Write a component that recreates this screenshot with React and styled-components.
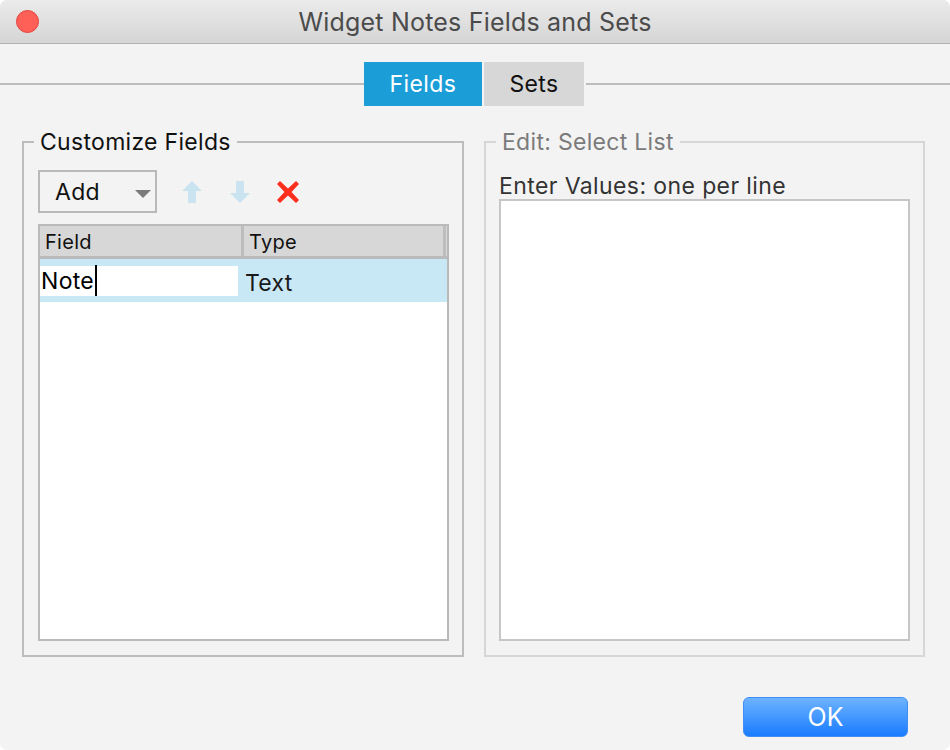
import React from "react";
import styled, { createGlobalStyle } from "styled-components";

const GlobalStyle = createGlobalStyle`
    html, body {
        margin: 0;
        padding: 0;
        background: #ffffff;
    }
    body {
        font-family: Inter, "Liberation Sans", sans-serif;
    }
`;

const App = () => {
    return (
        <Window>
            <GlobalStyle />
            <TitleBar>
                <CloseDot />
                <Title>Widget Notes Fields and Sets</Title>
            </TitleBar>

            <TabStrip>
                <TabLine />
                <Tab $active>Fields</Tab>
                <Tab $width={100}>Sets</Tab>
                <TabLine />
            </TabStrip>

            <Groups>
                <Group>
                    <Legend>Customize Fields</Legend>
                    <Toolbar>
                        <Combo>
                            Add
                            <Caret />
                        </Combo>
                        <IconButton>
                            <svg width="20" height="22" viewBox="0 0 20 22">
                                <path d="M10 0 L20 10 H14 V22 H6 V10 H0 Z" fill="#cae3f1" />
                            </svg>
                        </IconButton>
                        <IconButton>
                            <svg width="20" height="22" viewBox="0 0 20 22">
                                <path d="M10 22 L20 12 H14 V0 H6 V12 H0 Z" fill="#cae3f1" />
                            </svg>
                        </IconButton>
                        <IconButton>
                            <svg width="22" height="22" viewBox="0 0 22 22">
                                <path
                                    d="M3 0 L11 7.5 L19 0 L22 3 L14.5 11 L22 19 L19 22 L11 14.5 L3 22 L0 19 L7.5 11 L0 3 Z"
                                    fill="#ff2d1e"
                                />
                            </svg>
                        </IconButton>
                    </Toolbar>
                    <Table>
                        <HeaderRow>
                            <HeaderCell $width={204}>Field</HeaderCell>
                            <HeaderCell $width={202}>Type</HeaderCell>
                            <HeaderFiller />
                        </HeaderRow>
                        <Row $selected>
                            <Cell $width={204}>
                                <EditBox>
                                    Note
                                    <Cursor />
                                </EditBox>
                            </Cell>
                            <Cell>Text</Cell>
                        </Row>
                    </Table>
                </Group>

                <Group $disabled>
                    <Legend $disabled>Edit: Select List</Legend>
                    <FieldLabel>Enter Values: one per line</FieldLabel>
                    <ValuesArea />
                </Group>
            </Groups>

            <Footer>
                <OkButton>OK</OkButton>
            </Footer>
        </Window>
    );
};

export default App;

const Window = styled.div`
    width: 950px;
    height: 750px;
    display: flex;
    flex-direction: column;
    background: #f3f3f3;
    border-radius: 7px;
    overflow: hidden;
    color: #111;
`;

const TitleBar = styled.div`
    height: 43px;
    flex-shrink: 0;
    display: flex;
    align-items: center;
    justify-content: center;
    background: linear-gradient(#ebebeb, #d5d5d5);
    border-bottom: 1px solid #b1b1b1;
    position: relative;
`;

const CloseDot = styled.div`
    position: absolute;
    left: 16px;
    top: 10px;
    width: 23px;
    height: 23px;
    border-radius: 50%;
    background: #fe5f57;
    border: 1px solid #e2463f;
    box-sizing: border-box;
`;

const Title = styled.div`
    font-size: 25px;
    color: #4b4b4b;
    letter-spacing: 0.2px;
`;

const TabStrip = styled.div`
    display: flex;
    align-items: center;
    margin-top: 18px;
    gap: 2px;
`;

const TabLine = styled.div`
    flex: 1;
    height: 2px;
    background: #bcbcbc;
`;

const Tab = styled.div`
    width: ${(p) => p.$width || 118}px;
    height: 44px;
    display: flex;
    align-items: center;
    justify-content: center;
    font-size: 23px;
    letter-spacing: 0.4px;
    background: ${(p) => (p.$active ? "#1b9ed8" : "#d7d7d7")};
    color: ${(p) => (p.$active ? "#ffffff" : "#111111")};
    margin-left: ${(p) => (p.$active ? "-2px" : "0")};
`;

const Groups = styled.div`
    display: grid;
    grid-template-columns: 442px 441px;
    gap: 20px;
    padding: 23px 0 0 22px;
    height: 528px;
`;

const Group = styled.fieldset`
    margin: 0;
    padding: 15px 13px 14px 14px;
    border: 2px solid ${(p) => (p.$disabled ? "#d6d6d6" : "#bcbcbc")};
    display: flex;
    flex-direction: column;
    min-width: 0;
    box-sizing: border-box;
`;

const Legend = styled.legend`
    font-size: 23px;
    letter-spacing: 0.3px;
    line-height: 26px;
    padding: 0 6px;
    margin-left: -4px;
    color: ${(p) => (p.$disabled ? "#7b7b7b" : "#111111")};
`;

const Toolbar = styled.div`
    display: flex;
    align-items: center;
    height: 43px;
    margin-bottom: 11px;
`;

const Combo = styled.div`
    width: 119px;
    height: 43px;
    box-sizing: border-box;
    border: 2px solid #b9b9b9;
    display: flex;
    align-items: center;
    justify-content: space-between;
    padding: 0 4px 0 15px;
    font-size: 23px;
    letter-spacing: 0.3px;
    margin-right: 11px;
`;

const Caret = styled.span`
    width: 0;
    height: 0;
    border-left: 8px solid transparent;
    border-right: 8px solid transparent;
    border-top: 8px solid #7a7a7a;
    margin-top: 4px;
`;

const IconButton = styled.div`
    width: 48px;
    height: 43px;
    display: flex;
    align-items: center;
    justify-content: center;
`;

const Table = styled.div`
    flex: 1;
    background: #ffffff;
    border: 2px solid #bababa;
    display: flex;
    flex-direction: column;
`;

const HeaderRow = styled.div`
    display: flex;
    height: 30px;
    background: #d7d7d7;
    border-bottom: 3px solid #bababa;
`;

const HeaderCell = styled.div`
    width: ${(p) => p.$width}px;
    box-sizing: border-box;
    border-right: 3px solid #bdbdbd;
    padding-left: 5px;
    font-size: 20px;
    letter-spacing: 0.3px;
    line-height: 32px;
    color: #111;
    flex-shrink: 0;
`;

const HeaderFiller = styled.div`
    flex: 1;
`;

const Row = styled.div`
    display: flex;
    align-items: center;
    height: 43px;
    background: ${(p) => (p.$selected ? "#c9e8f6" : "transparent")};
`;

const Cell = styled.div`
    width: ${(p) => (p.$width ? `${p.$width}px` : "auto")};
    flex: ${(p) => (p.$width ? "none" : "1")};
    font-size: 23px;
    letter-spacing: 0.3px;
    padding-left: ${(p) => (p.$width ? "0" : "1px")};
    padding-top: 4px;
    color: #1a1a1a;
`;

const EditBox = styled.div`
    width: 198px;
    height: 30px;
    background: #ffffff;
    display: flex;
    align-items: center;
    color: #000;
    padding-left: 1px;
    box-sizing: border-box;
    margin-top: -4px;
`;

const Cursor = styled.span`
    width: 2px;
    height: 31px;
    background: #000;
    margin-left: 1px;
`;

const FieldLabel = styled.div`
    font-size: 23px;
    letter-spacing: 0.4px;
    line-height: 25px;
    color: #333;
    margin: 4px 0 0 -1px;
`;

const ValuesArea = styled.div`
    flex: 1;
    margin-left: -1px;
    background: #ffffff;
    border: 2px solid #c6c6c6;
`;

const Footer = styled.div`
    flex: 1;
    display: flex;
    justify-content: flex-end;
    align-items: flex-end;
    padding: 0 42px 13px 0;
`;

const OkButton = styled.button`
    width: 165px;
    height: 40px;
    border-radius: 6px;
    border: 1px solid #3f8ef5;
    background: linear-gradient(#6db3ff, #1a7cff);
    color: #ffffff;
    font-family: Inter, "Liberation Sans", sans-serif;
    font-size: 25px;
    cursor: pointer;
`;
